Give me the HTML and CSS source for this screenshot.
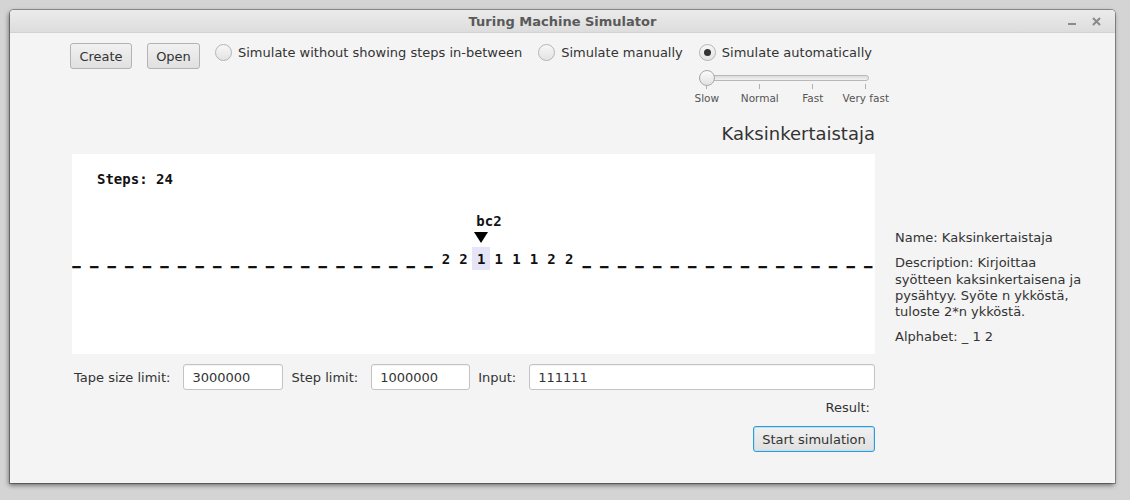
FILE: index.html
```html
<!DOCTYPE html>
<html>
<head>
<meta charset="utf-8">
<title>Turing Machine Simulator</title>
<link rel="stylesheet" href="styles.css">
</head>
<body>
<div class="window">
  <div class="titlebar">
    <span></span>
    <span class="title">Turing Machine Simulator</span>
    <div class="wm">
      <span class="wm-min"></span>
      <svg class="wm-close" width="9" height="9" viewBox="0 0 9 9"><path d="M1 1L8 8M8 1L1 8" stroke="#8a8a8a" stroke-width="2"/></svg>
    </div>
  </div>
  <div class="content">
    <div class="main">
      <div class="toolbar">
        <button class="btn btn-create">Create</button>
        <button class="btn btn-open">Open</button>
        <label class="radio"><span class="circle"></span>Simulate without showing steps in-between</label>
        <label class="radio"><span class="circle"></span>Simulate manually</label>
        <div class="auto">
          <label class="radio"><span class="circle on"></span>Simulate automatically</label>
          <div class="slider"><div class="track"></div><div class="thumb"></div></div>
          <div class="ticks">
            <div class="tick"><i></i><span>Slow</span></div>
            <div class="tick"><i></i><span>Normal</span></div>
            <div class="tick"><i></i><span>Fast</span></div>
            <div class="tick"><i></i><span>Very fast</span></div>
          </div>
        </div>
      </div>
      <h1 class="machine">Kaksinkertaistaja</h1>
      <div class="tapecanvas">
        <div class="steps">Steps: 24</div>
        <div class="tape">
          <span class="cell b">_</span><span class="cell b">_</span><span class="cell b">_</span><span class="cell b">_</span><span class="cell b">_</span><span class="cell b">_</span><span class="cell b">_</span><span class="cell b">_</span><span class="cell b">_</span><span class="cell b">_</span><span class="cell b">_</span><span class="cell b">_</span><span class="cell b">_</span><span class="cell b">_</span><span class="cell b">_</span><span class="cell b">_</span><span class="cell b">_</span><span class="cell b">_</span><span class="cell b">_</span><span class="cell b">_</span><span class="cell b">_</span><span class="cell">2</span><span class="cell">2</span><span class="cell head">1<span class="state">bc2</span><svg class="arrow" width="14" height="11" viewBox="0 0 14 11"><path d="M0 0H14L7 11Z" fill="#000"/></svg></span><span class="cell">1</span><span class="cell">1</span><span class="cell">1</span><span class="cell">2</span><span class="cell">2</span><span class="cell b">_</span><span class="cell b">_</span><span class="cell b">_</span><span class="cell b">_</span><span class="cell b">_</span><span class="cell b">_</span><span class="cell b">_</span><span class="cell b">_</span><span class="cell b">_</span><span class="cell b">_</span><span class="cell b">_</span><span class="cell b">_</span><span class="cell b">_</span><span class="cell b">_</span><span class="cell b">_</span><span class="cell b">_</span><span class="cell b">_</span>
        </div>
      </div>
      <div class="limits">
        <span class="lbl">Tape size limit:</span>
        <input class="field f-tape" type="text" value="3000000">
        <span class="lbl">Step limit:</span>
        <input class="field f-step" type="text" value="1000000">
        <span class="lbl">Input:</span>
        <input class="field f-input" type="text" value="111111">
      </div>
      <div class="result">Result:</div>
      <div class="actions"><button class="btn primary">Start simulation</button></div>
    </div>
    <aside class="info">
      <p>Name: Kaksinkertaistaja</p>
      <p>Description: Kirjoittaa syötteen kaksinkertaisena ja pysähtyy. Syöte n ykköstä, tuloste 2*n ykköstä.</p>
      <p>Alphabet: _ 1 2</p>
    </aside>
  </div>
</div>
</body>
</html>
```

FILE: styles.css
```css
html, body {
  margin: 0;
  padding: 0;
}
body {
  background: #d4d4d4;
  font-family: "DejaVu Sans", sans-serif;
  font-size: 13px;
  color: #333;
  height: 500px;
  overflow: hidden;
}
.window {
  margin: 10px 0 0 10px;
  width: 1105px;
  height: 473px;
  background: #f4f4f4;
  border-radius: 4px 4px 0 0;
  box-shadow: 0 0 0 1px rgba(0,0,0,0.30), -1px 2px 5px rgba(0,0,0,0.55);
  overflow: hidden;
  display: flex;
  flex-direction: column;
}
.titlebar {
  height: 23px;
  flex: 0 0 23px;
  box-sizing: border-box;
  background: linear-gradient(#ebebeb, #dddddd);
  border-bottom: 1px solid #d2d2d2;
  display: grid;
  grid-template-columns: 1fr auto 1fr;
  align-items: center;
}
.title {
  font-weight: bold;
  font-size: 13px;
  color: #5a5a5a;
}
.wm {
  display: flex;
  justify-content: flex-end;
  align-items: center;
  padding-right: 14px;
  gap: 16px;
}
.wm-min {
  display: block;
  width: 8px;
  height: 2px;
  background: #8a8a8a;
  margin-top: 6px;
}
.content {
  display: grid;
  grid-template-columns: 803px 190px;
  column-gap: 20px;
  padding: 10px 0 0 62px;
}
.toolbar {
  display: flex;
  align-items: flex-start;
  margin-left: -2px;
}
.btn {
  font: inherit;
  color: #333;
  height: 26px;
  padding: 0;
  border: 1px solid #b3b3b3;
  border-radius: 3px;
  background: linear-gradient(#f1f1f1, #e0e0e0);
  margin-right: 15px;
  box-sizing: border-box;
}
.btn-create { width: 62px; }
.btn-open { width: 53px; }
.radio {
  display: flex;
  align-items: center;
  gap: 6px;
  height: 17px;
  margin-top: 1px;
  margin-right: 16px;
  white-space: nowrap;
}
.circle {
  width: 17px;
  height: 17px;
  box-sizing: border-box;
  border-radius: 50%;
  border: 1px solid #b4b4b4;
  background: linear-gradient(#f7f7f7, #e3e3e3);
  display: flex;
  align-items: center;
  justify-content: center;
}
.circle.on::after {
  content: "";
  width: 7px;
  height: 7px;
  border-radius: 50%;
  background: #333;
}
.auto {
  display: flex;
  flex-direction: column;
}
.auto .radio { margin-right: 0; }
.slider {
  position: relative;
  width: 170px;
  height: 16px;
  margin-top: 9px;
}
.track {
  height: 6px;
  margin-top: 5px;
  box-sizing: border-box;
  border: 1px solid #b8b8b8;
  border-radius: 3px;
  background: linear-gradient(#dcdcdc, #f2f2f2);
}
.thumb {
  position: absolute;
  left: 0;
  top: 0;
  width: 16px;
  height: 16px;
  box-sizing: border-box;
  border-radius: 50%;
  border: 1px solid #a9a9a9;
  background: linear-gradient(#fbfbfb, #e2e2e2);
}
.ticks {
  display: flex;
  justify-content: space-between;
  padding: 0 3px 0 8px;
  margin-top: -2px;
  width: 170px;
  box-sizing: border-box;
}
.tick {
  width: 0;
  display: flex;
  flex-direction: column;
  align-items: center;
}
.tick i {
  display: block;
  width: 1px;
  height: 5px;
  background: #b0b0b0;
  flex: 0 0 5px;
}
.tick span {
  white-space: nowrap;
  font-size: 10.5px;
  line-height: 13px;
  margin-top: 2.5px;
  color: #555;
}
.machine {
  margin: 18.5px 0 0;
  font-size: 18px;
  font-weight: normal;
  line-height: 21px;
  text-align: right;
  color: #333;
}
.tapecanvas {
  margin-top: 10px;
  height: 200px;
  background: #fff;
  overflow: hidden;
  box-sizing: border-box;
  padding-top: 17px;
  font-family: "DejaVu Sans Mono", monospace;
  font-weight: bold;
  font-size: 14px;
  color: #111;
}
.steps {
  margin-left: 25px;
  line-height: 17px;
}
.tape {
  display: flex;
  margin: 59px 0 0 -4.3px;
}
.cell {
  flex: 0 0 17.6px;
  height: 23px;
  line-height: 25px;
  text-align: center;
  position: relative;
}
.cell.b {
  text-shadow: 0 1px 0 #111;
}
.cell.head {
  background: #e5e5f7;
}
.state {
  position: absolute;
  left: 4px;
  bottom: calc(100% + 17px);
  line-height: 17px;
}
.arrow {
  position: absolute;
  left: 2px;
  bottom: calc(100% + 4px);
}
.limits {
  display: flex;
  align-items: center;
  margin-top: 10px;
  padding-left: 2px;
}
.lbl {
  margin-right: 13px;
  white-space: nowrap;
}
.field {
  font: inherit;
  color: #333;
  height: 26px;
  box-sizing: border-box;
  border: 1px solid #c3c3c3;
  border-radius: 3px;
  background: #fff;
  padding: 0 8px;
  margin-right: 8px;
  box-shadow: inset 0 1px 1px rgba(0,0,0,0.05);
  outline: none;
}
.f-tape { width: 100px; }
.f-step { width: 99px; }
.f-input { flex: 1; min-width: 0; margin-right: 0; }
.result {
  margin-top: 10px;
  line-height: 16px;
  text-align: right;
  padding-right: 5px;
}
.actions {
  display: flex;
  justify-content: flex-end;
  margin-top: 10px;
}
.btn.primary {
  width: 122px;
  margin-right: 0;
  border-color: #2c9cd6;
  box-shadow: inset 0 0 0 1px #bfe0f2;
}
.info {
  padding-top: 187px;
}
.info p {
  margin: 0 0 9px;
  line-height: 16.3px;
}
```
